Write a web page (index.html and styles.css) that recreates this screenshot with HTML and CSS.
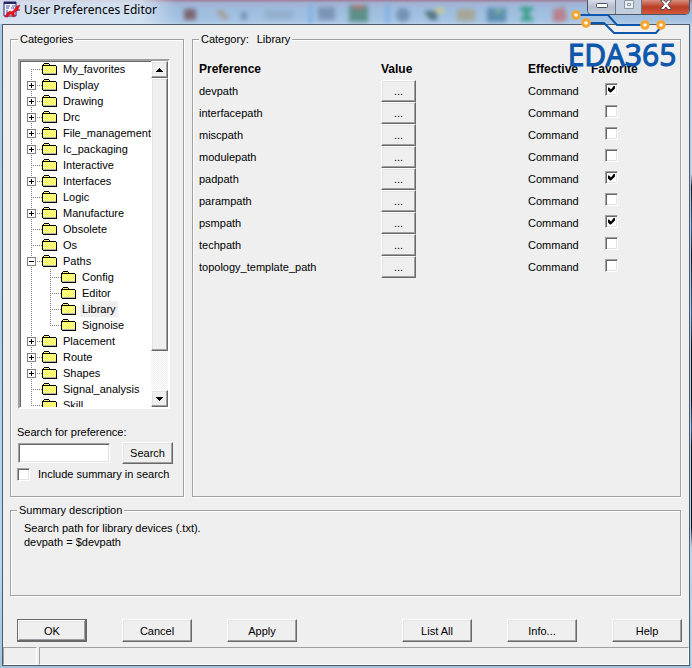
FILE: index.html
```html
<!DOCTYPE html>
<html lang="en">
<head>
<meta charset="utf-8">
<title>User Preferences Editor</title>
<link rel="stylesheet" href="styles.css">
</head>
<body>
<svg class="defs" aria-hidden="true">
  <defs>
    <pattern id="dither" width="2" height="2" patternUnits="userSpaceOnUse">
      <rect width="2" height="2" fill="#ffffe8"/><rect width="1" height="1" fill="#ff0"/><rect x="1" y="1" width="1" height="1" fill="#ff0"/>
    </pattern>
    <symbol id="folder" viewBox="0 0 16 16">
      <path d="M1 4h1v-1h5v1h1v1h6v8h-13z" fill="url(#dither)"/>
      <path d="M1 12h13v1h-13z" fill="#b4b4b4"/>
      <path d="M2 2h5v1h-5zM1 3h1v1h-1zM7 3h1v1h-1zM0 4h1v9h-1zM1 5h13v-1h-6v0h-7zM14 5h1v9h-1zM1 13h14v1h-14z" fill="#000"/>
    </symbol>
    <symbol id="trunk" viewBox="0 0 19 16"><path d="M8.500 0V16" stroke="#808080" stroke-dasharray="1 1"/></symbol>
    <symbol id="tee" viewBox="0 0 19 16"><path d="M8.500 0V16M8 8.500H19" stroke="#808080" stroke-dasharray="1 1"/></symbol>
    <symbol id="first" viewBox="0 0 19 16"><path d="M8.500 8V16M8 8.500H19" stroke="#808080" stroke-dasharray="1 1"/></symbol>
    <symbol id="end" viewBox="0 0 19 16"><path d="M8.500 0V9M8 8.500H19" stroke="#808080" stroke-dasharray="1 1"/></symbol>
    <symbol id="plus" viewBox="0 0 19 16"><use href="#tee"/><rect x="4.500" y="4.500" width="8" height="8" fill="#fff" stroke="#808080"/><path d="M6 8.500h5M8.500 6v5" stroke="#000"/></symbol>
    <symbol id="minus" viewBox="0 0 19 16"><use href="#tee"/><rect x="4.500" y="4.500" width="8" height="8" fill="#fff" stroke="#808080"/><path d="M6 8.500h5" stroke="#000"/></symbol>
  </defs>
</svg>
<div class="window">
  <header class="titlebar">
    <svg class="backdrop" viewBox="0 0 692 24" preserveAspectRatio="none" aria-hidden="true">
      <g class="soft">
        <rect x="184" y="9" width="12" height="11" fill="#704850"/>
        <path d="M216 11l6-1 7 8-5 2z" fill="#a89078"/>
        <rect x="241" y="12" width="6" height="8" fill="#6688aa"/>
        <rect x="265" y="10" width="28" height="9" fill="#8eabc8"/>
        <rect x="309" y="4" width="3" height="20" fill="#6aa8e8"/>
        <rect x="318" y="7" width="17" height="13" fill="#7088a8"/>
        <rect x="349" y="5" width="19" height="17" fill="#47816c"/><rect x="352" y="5" width="13" height="4" fill="#b06050"/>
        <rect x="386" y="4" width="3" height="20" fill="#6aa8e8"/>
        <circle cx="403" cy="15" r="7" fill="#6684a8"/>
        <path d="M424 11h13v9h-7z" fill="#3d5c62"/><rect x="435" y="8" width="9" height="5" fill="#d6d074"/>
        <rect x="457" y="9" width="18" height="12" fill="#a89d80"/>
        <rect x="487" y="8" width="19" height="14" fill="#447c9c"/><rect x="495" y="9" width="7" height="5" fill="#69a58e"/>
        <path d="M520 7h13v4h-4v6h4v4h-12v-4h3v-6h-4z" fill="#16936a"/>
        <path d="M553 9l12-2 2 14-14 1z" fill="#c06d70"/>
      </g>
    </svg>
    <svg class="appicon" viewBox="0 0 18 18" aria-hidden="true">
      <path d="M1 1h12v14H1z" fill="#f4f4ff" stroke="#24246c" stroke-width="1"/>
      <path d="M1 2h12" stroke="#24246c" stroke-width="2"/>
      <path d="M3 5h4M9 5h3M3 7h3M8 7h3M3 10h2M3 12h2" stroke="#4950b0"/>
      <path d="M2 16l2-4 3-2 2 1 5-6 3-1-2 4 2 1-4 1-2 2 1 3-2 1-2-3-2 1-1 2z" fill="#ed1320" stroke="#a51224" stroke-width=".5"/>
    </svg>
    <h1>User Preferences Editor</h1>
    <div class="caption-buttons">
      <button class="cap min" aria-label="Minimize"><svg viewBox="0 0 14 10"><rect x="1.500" y="3.500" width="11" height="4" rx="1" fill="#fff" stroke="#4d5262"/></svg></button>
      <button class="cap max" aria-label="Maximize" disabled><svg viewBox="0 0 14 10"><path d="M2.500 .5h9v8h-9zM5.500 3.500h3v2h-3z" fill="#e9edf2" stroke="#8f98a5"/></svg></button>
      <button class="cap close" aria-label="Close"><svg viewBox="0 0 14 10"><path d="M2 0h3l2 2.500L9 0h3v1L9 4.500 12 8.500v1H9L7 7 5 9.500H2v-1L5 4.500 2 1z" fill="#fff" stroke="#574652"/></svg></button>
    </div>
  </header>

  <main class="client">
    <div class="panels">
      <fieldset class="group categories">
        <legend>Categories</legend>
        <div class="treebox">
          <ul class="tree">
            <li><svg class="twig"><use href="#first"/></svg><svg class="ico"><use href="#folder"/></svg><span>My_favorites</span></li>
            <li><svg class="twig"><use href="#plus"/></svg><svg class="ico"><use href="#folder"/></svg><span>Display</span></li>
            <li><svg class="twig"><use href="#plus"/></svg><svg class="ico"><use href="#folder"/></svg><span>Drawing</span></li>
            <li><svg class="twig"><use href="#plus"/></svg><svg class="ico"><use href="#folder"/></svg><span>Drc</span></li>
            <li><svg class="twig"><use href="#plus"/></svg><svg class="ico"><use href="#folder"/></svg><span>File_management</span></li>
            <li><svg class="twig"><use href="#plus"/></svg><svg class="ico"><use href="#folder"/></svg><span>Ic_packaging</span></li>
            <li><svg class="twig"><use href="#tee"/></svg><svg class="ico"><use href="#folder"/></svg><span>Interactive</span></li>
            <li><svg class="twig"><use href="#plus"/></svg><svg class="ico"><use href="#folder"/></svg><span>Interfaces</span></li>
            <li><svg class="twig"><use href="#tee"/></svg><svg class="ico"><use href="#folder"/></svg><span>Logic</span></li>
            <li><svg class="twig"><use href="#plus"/></svg><svg class="ico"><use href="#folder"/></svg><span>Manufacture</span></li>
            <li><svg class="twig"><use href="#tee"/></svg><svg class="ico"><use href="#folder"/></svg><span>Obsolete</span></li>
            <li><svg class="twig"><use href="#tee"/></svg><svg class="ico"><use href="#folder"/></svg><span>Os</span></li>
            <li><svg class="twig"><use href="#minus"/></svg><svg class="ico"><use href="#folder"/></svg><span>Paths</span></li>
            <li><svg class="twig"><use href="#trunk"/></svg><svg class="twig"><use href="#tee"/></svg><svg class="ico"><use href="#folder"/></svg><span>Config</span></li>
            <li><svg class="twig"><use href="#trunk"/></svg><svg class="twig"><use href="#tee"/></svg><svg class="ico"><use href="#folder"/></svg><span>Editor</span></li>
            <li><svg class="twig"><use href="#trunk"/></svg><svg class="twig"><use href="#tee"/></svg><svg class="ico"><use href="#folder"/></svg><span class="selected">Library</span></li>
            <li><svg class="twig"><use href="#trunk"/></svg><svg class="twig"><use href="#end"/></svg><svg class="ico"><use href="#folder"/></svg><span>Signoise</span></li>
            <li><svg class="twig"><use href="#plus"/></svg><svg class="ico"><use href="#folder"/></svg><span>Placement</span></li>
            <li><svg class="twig"><use href="#plus"/></svg><svg class="ico"><use href="#folder"/></svg><span>Route</span></li>
            <li><svg class="twig"><use href="#plus"/></svg><svg class="ico"><use href="#folder"/></svg><span>Shapes</span></li>
            <li><svg class="twig"><use href="#tee"/></svg><svg class="ico"><use href="#folder"/></svg><span>Signal_analysis</span></li>
            <li><svg class="twig"><use href="#end"/></svg><svg class="ico"><use href="#folder"/></svg><span>Skill</span></li>
          </ul>
          <div class="scrollbar">
            <button class="arrow" aria-label="Scroll up"><svg viewBox="0 0 7 4"><path d="M3 0h1v1h1v1h1v1h1v1h-7v-1h1v-1h1v-1h1z"/></svg></button>
            <div class="thumb"></div>
            <button class="arrow" aria-label="Scroll down"><svg viewBox="0 0 7 4"><path d="M0 0h7v1h-1v1h-1v1h-1v1h-1v-1h-1v-1h-1v-1h-1z"/></svg></button>
          </div>
        </div>
        <div class="search">
          <label for="q">Search for preference:</label>
          <div class="search-row">
            <input id="q" class="textbox" type="text">
            <button class="btn">Search</button>
          </div>
          <label class="include"><input class="check" type="checkbox">Include summary in search</label>
        </div>
      </fieldset>

      <fieldset class="group prefs">
        <legend><span>Category:</span><span>Library</span></legend>
        <table>
          <thead>
            <tr><th class="c-name">Preference</th><th>Value</th><th class="c-eff">Effective</th><th class="c-fav">Favorite</th></tr>
          </thead>
          <tbody>
            <tr><td>devpath</td><td><button class="btn more" aria-label="Edit devpath">...</button></td><td>Command</td><td class="fav"><input class="check" type="checkbox" aria-label="devpath favorite" checked></td></tr>
            <tr><td>interfacepath</td><td><button class="btn more" aria-label="Edit interfacepath">...</button></td><td>Command</td><td class="fav"><input class="check" type="checkbox" aria-label="interfacepath favorite"></td></tr>
            <tr><td>miscpath</td><td><button class="btn more" aria-label="Edit miscpath">...</button></td><td>Command</td><td class="fav"><input class="check" type="checkbox" aria-label="miscpath favorite"></td></tr>
            <tr><td>modulepath</td><td><button class="btn more" aria-label="Edit modulepath">...</button></td><td>Command</td><td class="fav"><input class="check" type="checkbox" aria-label="modulepath favorite"></td></tr>
            <tr><td>padpath</td><td><button class="btn more" aria-label="Edit padpath">...</button></td><td>Command</td><td class="fav"><input class="check" type="checkbox" aria-label="padpath favorite" checked></td></tr>
            <tr><td>parampath</td><td><button class="btn more" aria-label="Edit parampath">...</button></td><td>Command</td><td class="fav"><input class="check" type="checkbox" aria-label="parampath favorite"></td></tr>
            <tr><td>psmpath</td><td><button class="btn more" aria-label="Edit psmpath">...</button></td><td>Command</td><td class="fav"><input class="check" type="checkbox" aria-label="psmpath favorite" checked></td></tr>
            <tr><td>techpath</td><td><button class="btn more" aria-label="Edit techpath">...</button></td><td>Command</td><td class="fav"><input class="check" type="checkbox" aria-label="techpath favorite"></td></tr>
            <tr><td>topology_template_path</td><td><button class="btn more" aria-label="Edit topology_template_path">...</button></td><td>Command</td><td class="fav"><input class="check" type="checkbox" aria-label="topology_template_path favorite"></td></tr>
          </tbody>
        </table>
      </fieldset>
    </div>

    <fieldset class="group summary">
      <legend>Summary description</legend>
      <p>Search path for library devices (.txt).<br>devpath = $devpath</p>
    </fieldset>

    <div class="actions">
      <div class="action-set">
        <button class="btn default">OK</button>
        <button class="btn">Cancel</button>
        <button class="btn">Apply</button>
      </div>
      <div class="action-set">
        <button class="btn">List All</button>
        <button class="btn">Info...</button>
        <button class="btn">Help</button>
      </div>
    </div>

    <footer class="status"><div class="pane small"></div><div class="pane"></div></footer>
  </main>

  <div class="logo">
    <svg viewBox="0 0 112 26" aria-hidden="true">
      <g fill="none" stroke="#0c57ab" stroke-width="2"><path d="M14 5h28l9 10h26M24 13h14l10 10h42l5-6"/></g>
      <g fill="#fff" stroke="#f9a530" stroke-width="3"><circle cx="10" cy="5" r="3.300"/><circle cx="20" cy="13" r="3.300"/><circle cx="79" cy="15" r="3.300"/><circle cx="95" cy="15" r="3.300"/></g>
    </svg>
    <span>EDA365</span>
  </div>
</div>
</body>
</html>
```
FILE: styles.css
```css
* { box-sizing: border-box; }

body {
  margin: 0;
  font: 11px/14px "Liberation Sans", Arial, sans-serif;
  color: #000;
}

button, input { font: inherit; color: inherit; margin: 0; }
.defs { position: absolute; width: 0; height: 0; }

.window {
  position: relative;
  display: flex;
  flex-direction: column;
  min-height: 100vh;
  padding: 0 2px 2px 2px;
  background:
    linear-gradient(to bottom, #c6d8ea 26%, #101318 28%, #2d5f9c 34%, #14181e 38%, #2d5f9c 47%, #101318 52%, #101318 60%, #2d5f9c 64%, #101318 67%, #101318 79%, #b9d5ef 82%) right / 1px 100% no-repeat,
    linear-gradient(to bottom, #aac8e6, #b9d5ef 85%, #a3c3dc);
  overflow: hidden;
}

/* Title bar */
.titlebar {
  position: relative;
  display: flex;
  align-items: flex-start;
  height: 24px;
  margin: 0 -2px;
  padding-left: 3px;
  background: linear-gradient(to bottom, #9b7e98 0, #a4b0d2 3px, #9dbbdc 8px, #a4c2e2 20px, #b4cde7 24px);
}
.backdrop { position: absolute; inset: 0; width: 100%; height: 24px; }
.soft { filter: blur(2px); opacity: .75; }
.appicon { position: relative; width: 18px; height: 18px; margin-top: 1px; }
.titlebar::before {
  content: "";
  position: absolute;
  inset: 0 auto 0 0;
  width: 176px;
  background: linear-gradient(to right, #e2eaf4cc, #dce8f4cc 80%, #dce8f400);
  z-index: 0;
}
.titlebar h1 {
  position: relative;
  margin: 0 auto 0 3px;
  font: 12px/20px "Noto Sans", sans-serif;
}
.caption-buttons {
  position: relative;
  display: flex;
  height: 15px;
  margin-right: 2px;
  border: 1px solid #4e5568;
  border-top: 0;
  border-radius: 0 0 5px 5px;
  overflow: hidden;
}
.cap {
  display: flex;
  align-items: center;
  justify-content: center;
  width: 28px;
  padding: 0 0 4px;
  border: 0;
  border-right: 1px solid #6c7488;
  background: linear-gradient(to bottom, #d9dfea, #b5bccb 50%, #c5ccda);
}
.cap svg { width: 14px; height: 10px; }
.cap.max { width: 26px; background: #c2cedd; }
.cap.close { width: 47px; border-right: 0; background: linear-gradient(to bottom, #d99182, #b93c25 50%, #d35a3c); }

/* Client area */
.client {
  flex: 1;
  display: flex;
  flex-direction: column;
  border: 1px solid #4f5b68;
  background: #efefef;
}
.panels {
  flex: 1;
  display: flex;
  gap: 8px;
  padding: 7px 8px 0 7px;
}
.group {
  min-width: 0;
  margin: 0;
  padding: 0;
  border: 1px solid #a0a0a0;
  box-shadow: 1px 1px 0 #fff, inset 1px 1px 0 #fff;
}
.group legend {
  padding: 0 2px;
  background: #efefef;
}
.categories { width: 174px; flex: none; padding: 13px 7px 0 7px; }
.prefs { flex: 1; padding-left: 6px; }
.prefs legend span + span { margin-left: 8px; }

/* Category tree */
.treebox {
  display: flex;
  height: 350px;
  width: 152px;
  background: #fff;
  border: 2px solid;
  border-color: #a0a0a0 #fff #fff #a0a0a0;
  box-shadow: inset 1px 1px 0 #696969;
}
.tree {
  flex: 1;
  min-width: 0;
  margin: 0;
  padding: 0 0 0 3px;
  list-style: none;
  overflow: hidden;
}
.tree li { display: flex; height: 16px; line-height: 16px; white-space: nowrap; }
.twig { flex: none; width: 19px; height: 16px; }
.ico { flex: none; width: 16px; height: 16px; margin-right: 3px; }
.tree span { padding: 0 2px; }
.tree .selected { background: #efefef; }

.scrollbar {
  display: flex;
  flex-direction: column;
  width: 17px;
  background: repeating-conic-gradient(#fff 0 25%, #efefef 0 50%) 0 0 / 2px 2px;
}
.arrow, .thumb, .btn {
  border: 1px solid;
  border-color: #fff #696969 #696969 #fff;
  box-shadow: inset -1px -1px 0 #a0a0a0, inset 1px 1px 0 #e3e3e3;
  background: #efefef;
}
.arrow { display: flex; align-items: center; justify-content: center; height: 17px; padding: 0; }
.arrow svg { width: 7px; height: 4px; }
.thumb { height: 273px; margin-bottom: auto; }

/* Search */
.search { display: flex; flex-direction: column; margin: 16px 0 0 -1px; }
.search-row { display: flex; justify-content: space-between; align-items: center; margin: 3px 3px 3px 1px; }
.textbox {
  width: 92px;
  height: 20px;
  padding: 0 3px;
  border: 1px solid;
  border-color: #a0a0a0 #fff #fff #a0a0a0;
  box-shadow: inset 1px 1px 0 #696969, inset -1px -1px 0 #e3e3e3;
  background: #fff;
}
.search-row .btn { width: 51px; }
.include { display: flex; align-items: center; gap: 8px; height: 14px; }

.btn { height: 22px; padding: 0; text-align: center; }

.check {
  appearance: none;
  flex: none;
  display: block;
  width: 13px;
  height: 13px;
  border: 1px solid;
  border-color: #a0a0a0 #fff #fff #a0a0a0;
  box-shadow: inset 1px 1px 0 #696969, inset -1px -1px 0 #e3e3e3;
  background: #fff;
}
.check:checked::before {
  content: "";
  display: block;
  width: 7px;
  height: 7px;
  margin: 2px;
  background: #000;
  clip-path: polygon(0 2px, 1px 2px, 3px 4px, 6px 0, 7px 0, 7px 3px, 3px 7px, 2px 7px, 0 5px);
}

/* Preference table */
table { width: 100%; border-collapse: collapse; table-layout: fixed; margin-top: 15px; }
th, td { padding: 0; text-align: left; height: 22px; }
th { font-size: 12px; font-weight: bold; height: 19px; padding-bottom: 3px; }
.c-name { width: 182px; }
.c-eff { width: 63px; }
.c-fav { width: 89px; }
.more { display: block; width: 35px; }
.fav .check { margin: 0 0 4px 14px; }

/* Summary */
.summary { height: 93px; margin: 6px 8px 0 7px; }
.summary legend { margin-left: 6px; }
.summary p { margin: 4px 13px; }

/* Bottom buttons */
.actions { display: flex; justify-content: space-between; padding: 23px 7px 5px 14px; }
.action-set { display: flex; gap: 35px; }
.actions .btn { width: 70px; height: 23px; }
.actions .default {
  border-color: #696969;
  box-shadow: inset -1px -1px 0 #696969, inset 1px 1px 0 #fff, inset -2px -2px 0 #a0a0a0, inset 2px 2px 0 #e3e3e3;
}

.status { display: flex; gap: 2px; height: 18px; }
.pane {
  flex: 1;
  border: 1px solid;
  border-color: #a0a0a0 #fff #fff #a0a0a0;
}
.pane.small { flex: none; width: 34px; }

/* Watermark */
.logo {
  position: absolute;
  top: 10px;
  right: 14px;
  width: 112px;
  color: #0c57ab;
  pointer-events: none;
}
.logo svg { display: block; width: 112px; height: 26px; }
.logo span { display: block; font: 30px/38px "Noto Sans", sans-serif; text-align: center; -webkit-text-stroke: 1px #0c57ab; }
```
